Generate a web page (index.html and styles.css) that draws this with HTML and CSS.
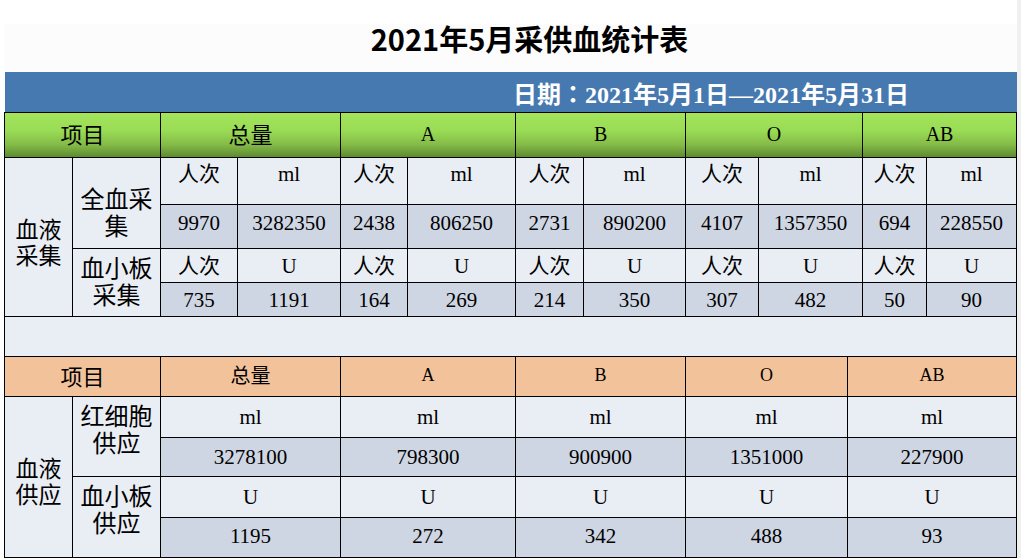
FILE: index.html
```html
<!DOCTYPE html>
<html lang="zh-CN">
<head>
<meta charset="utf-8">
<title>2021年5月采供血统计表</title>
<link rel="stylesheet" href="styles.css">
</head>
<body>
<div class="page">
  <div class="title">2021年5月采供血统计表</div>
  <div class="dateband">日期<span class="colon">：</span>2021年5月1日—2021年5月31日</div>

  <table class="grid upper">
    <colgroup>
      <col class="w68"><col class="w88"><col class="w77"><col class="w103">
      <col class="w67"><col class="w108"><col class="w68"><col class="w102">
      <col class="w73"><col class="w104"><col class="w64"><col class="w90">
    </colgroup>
    <tr class="h45 green">
      <th colspan="2" class="hc">项目</th>
      <th colspan="2" class="hc">总量</th>
      <th colspan="2" class="hl">A</th>
      <th colspan="2" class="hl">B</th>
      <th colspan="2" class="hl">O</th>
      <th colspan="2" class="hl">AB</th>
    </tr>
    <tr class="h47 light">
      <td rowspan="4" class="lab lab-a">血液<br>采集</td>
      <td rowspan="2" class="lab lab-b">全血采集</td>
      <td class="top">人次</td><td class="top">ml</td>
      <td class="top">人次</td><td class="top">ml</td>
      <td class="top">人次</td><td class="top">ml</td>
      <td class="top">人次</td><td class="top">ml</td>
      <td class="top">人次</td><td class="top">ml</td>
    </tr>
    <tr class="h44 dark">
      <td class="up">9970</td><td class="up">3282350</td>
      <td class="up">2438</td><td class="up">806250</td>
      <td class="up">2731</td><td class="up">890200</td>
      <td class="up">4107</td><td class="up">1357350</td>
      <td class="up">694</td><td class="up">228550</td>
    </tr>
    <tr class="h34 light">
      <td rowspan="2" class="lab lab-c">血小板采集</td>
      <td>人次</td><td>U</td>
      <td>人次</td><td>U</td>
      <td>人次</td><td>U</td>
      <td>人次</td><td>U</td>
      <td>人次</td><td>U</td>
    </tr>
    <tr class="h34 dark">
      <td>735</td><td>1191</td>
      <td>164</td><td>269</td>
      <td>214</td><td>350</td>
      <td>307</td><td>482</td>
      <td>50</td><td>90</td>
    </tr>
    <tr class="h40 light">
      <td colspan="12" class="blank"></td>
    </tr>
  </table>

  <table class="grid lower">
    <colgroup>
      <col class="w68"><col class="w88"><col class="w180"><col class="w175">
      <col class="w170"><col class="w162"><col class="w169">
    </colgroup>
    <tr class="h40 orange">
      <th colspan="2" class="hc">项目</th>
      <th class="hc2">总量</th>
      <th class="hl2">A</th>
      <th class="hl2">B</th>
      <th class="hl2">O</th>
      <th class="hl2">AB</th>
    </tr>
    <tr class="h41 light">
      <td rowspan="4" class="lab lab-d">血液<br>供应</td>
      <td rowspan="2" class="lab lab-e">红细胞<br>供应</td>
      <td>ml</td><td>ml</td><td>ml</td><td>ml</td><td>ml</td>
    </tr>
    <tr class="h39 dark">
      <td>3278100</td><td>798300</td><td>900900</td><td>1351000</td><td>227900</td>
    </tr>
    <tr class="h41 light">
      <td rowspan="2" class="lab lab-e">血小板<br>供应</td>
      <td>U</td><td>U</td><td>U</td><td>U</td><td>U</td>
    </tr>
    <tr class="h40 dark">
      <td class="up2">1195</td><td class="up2">272</td><td class="up2">342</td><td class="up2">488</td><td class="up2">93</td>
    </tr>
  </table>
</div>
</body>
</html>
```

FILE: styles.css
```css
html, body {
  margin: 0;
  padding: 0;
  background: #ffffff;
}

body {
  width: 1021px;
  height: 558px;
  overflow: hidden;
  background: linear-gradient(to right, #ffffff 0, #ffffff 1017px, #f0f0f0 1017px, #f0f0f0 100%);
}

.page {
  margin-left: 4px;
  width: 1013px;
}

.title {
  height: 72px;
  box-sizing: border-box;
  padding-left: 38px;
  padding-top: 4px;
  display: flex;
  align-items: center;
  justify-content: center;
  font-family: "Noto Sans CJK SC", sans-serif;
  font-weight: 700;
  font-size: 29px;
  color: #000;
  background: linear-gradient(to bottom, #ffffff 0, #ffffff 24px, #fcfcfc 24px, #fcfcfc 100%);
}

.dateband {
  margin-left: 1px;
  height: 40px;
  box-sizing: border-box;
  display: flex;
  align-items: center;
  padding-left: 508px;
  background: #4779b1;
  color: #ffffff;
  font-family: "Liberation Serif", "Noto Sans CJK SC", serif;
  font-weight: 700;
  font-size: 24px;
  white-space: nowrap;
}

.colon {
  font-family: "Noto Sans CJK TC", "Noto Sans CJK SC", sans-serif;
}

.grid {
  border-collapse: separate;
  border-spacing: 0;
  table-layout: fixed;
  width: 1013px;
  border-left: 1px solid #000;
}

.upper {
  border-top: 1px solid #000;
}

.grid th,
.grid td {
  border-right: 1px solid #000;
  border-bottom: 1px solid #000;
  padding: 0;
  text-align: center;
  vertical-align: middle;
  color: #000;
  font-family: "Liberation Serif", "Noto Sans CJK SC", serif;
  font-size: 21px;
  font-weight: 400;
  line-height: 24px;
  white-space: nowrap;
}

.w68 { width: 68px; }
.w88 { width: 88px; }
.w77 { width: 77px; }
.w103 { width: 103px; }
.w67 { width: 67px; }
.w108 { width: 108px; }
.w102 { width: 102px; }
.w73 { width: 73px; }
.w104 { width: 104px; }
.w64 { width: 64px; }
.w90 { width: 90px; }
.w180 { width: 180px; }
.w175 { width: 175px; }
.w170 { width: 170px; }
.w162 { width: 162px; }
.w169 { width: 169px; }

.h45 { height: 45px; }
.h47 { height: 47px; }
.h44 { height: 44px; }
.h34 { height: 34px; }
.h40 { height: 40px; }
.h41 { height: 41px; }
.h39 { height: 39px; }

.green th {
  background: linear-gradient(to bottom, #a3e65c 0%, #99dc55 40%, #84bb48 72%, #5d8a31 100%);
}

.orange th {
  background: #f2c39b;
}

.light td { background: #e9edf4; }
.dark td { background: #cfd6e3; }
.lab { background: #e9edf4 !important; }

.hc {
  font-family: "Noto Sans CJK SC", sans-serif !important;
  font-size: 22px !important;
  padding-bottom: 4px !important;
}

.hl {
  font-size: 20px !important;
  padding-bottom: 2px !important;
}

.hc2 {
  font-family: "Noto Sans CJK SC", sans-serif !important;
  font-size: 20px !important;
  padding-bottom: 4px !important;
}

.hl2 {
  font-size: 18px !important;
  padding-bottom: 4px !important;
}

.top {
  vertical-align: top !important;
  padding-top: 4px !important;
}

.up { padding-bottom: 8px !important; }
.up2 { padding-bottom: 4px !important; }

.lab {
  font-family: "Liberation Serif", "Noto Sans CJK SC", sans-serif !important;
  font-size: 24px !important;
  white-space: normal !important;
}

.lab-a {
  font-size: 23px !important;
  line-height: 26px !important;
  padding-top: 14px !important;
}

.lab-b {
  line-height: 27px !important;
  vertical-align: top !important;
  padding: 29px 4px 0 4px !important;
}

.lab-c {
  line-height: 27px !important;
  padding: 0 4px !important;
}

.lab-d {
  font-size: 23px !important;
  line-height: 26px !important;
  padding-top: 12px !important;
}

.lab-e {
  line-height: 27px !important;
  padding-bottom: 12px !important;
}

.blank {
  background: #e9edf4;
}
```
